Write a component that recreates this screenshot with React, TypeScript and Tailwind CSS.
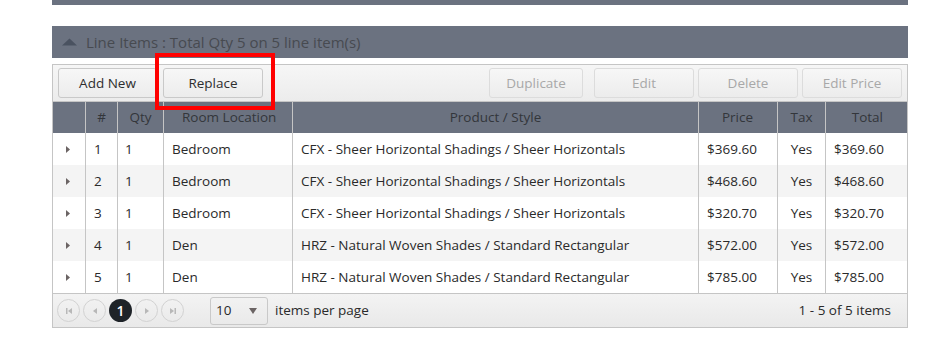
import React from "react";

const rows = [
  { n: 1, qty: 1, room: "Bedroom", product: "CFX - Sheer Horizontal Shadings / Sheer Horizontals", price: "$369.60", tax: "Yes", total: "$369.60" },
  { n: 2, qty: 1, room: "Bedroom", product: "CFX - Sheer Horizontal Shadings / Sheer Horizontals", price: "$468.60", tax: "Yes", total: "$468.60" },
  { n: 3, qty: 1, room: "Bedroom", product: "CFX - Sheer Horizontal Shadings / Sheer Horizontals", price: "$320.70", tax: "Yes", total: "$320.70" },
  { n: 4, qty: 1, room: "Den", product: "HRZ - Natural Woven Shades / Standard Rectangular", price: "$572.00", tax: "Yes", total: "$572.00" },
  { n: 5, qty: 1, room: "Den", product: "HRZ - Natural Woven Shades / Standard Rectangular", price: "$785.00", tax: "Yes", total: "$785.00" },
];

const cols = "grid grid-cols-[33px_32px_46px_129px_406px_79px_48px_81px]";

function Btn({ label, disabled, w }: { label: string; disabled?: boolean; w: string }) {
  return (
    <div
      className={`${w} h-[30px] flex items-center justify-center rounded-[3px] border ${
        disabled ? "border-[#dcdcdc] text-[#a8a8a8]" : "border-[#c9c9c9] text-[#2e2e2e]"
      } bg-gradient-to-b from-[#f7f7f7] to-[#ececec] text-[13.5px]`}
    >
      {label}
    </div>
  );
}

function PagerBtn({ children }: { children: React.ReactNode }) {
  return (
    <div className="w-[23px] h-[23px] rounded-full border border-[#d2d2d2] flex items-center justify-center">
      {children}
    </div>
  );
}

export default function App() {
  return (
    <div className="w-[930px] h-[347px] bg-white relative" style={{ fontFamily: '"Open Sans", "Noto Sans", sans-serif' }}>
      <div className="ml-[52px] w-[856px]">
        <div className="h-[5px] bg-[#6b7280]" />
        <div className="h-[21px]" />
        <div className="h-[32px] bg-[#6b7280] flex items-center pl-[10px] gap-[9px] text-[15px] text-[#474a50]">
          <svg width="15" height="8" viewBox="0 0 15 8"><path d="M0 7.5 L7.5 0.5 L15 7.5 Z" fill="#4a5260" /></svg>
          <span>Line Items : Total Qty 5 on 5 line item(s)</span>
        </div>
        <div className="h-[6px]" />
        <div className="border border-[#c5c5c5]">
          <div className="h-[36px] flex items-center px-[5px] bg-gradient-to-b from-[#f6f6f6] to-[#ececec]">
            <Btn label="Add New" w="w-[99px]" />
            <div className="w-[6px]" />
            <Btn label="Replace" w="w-[100px]" />
            <div className="flex-1" />
            <Btn label="Duplicate" disabled w="w-[94px]" />
            <div className="w-[11px]" />
            <Btn label="Edit" disabled w="w-[100px]" />
            <div className="w-[4px]" />
            <Btn label="Delete" disabled w="w-[100px]" />
            <div className="w-[4px]" />
            <Btn label="Edit Price" disabled w="w-[100px]" />
          </div>
          <div className={`${cols} h-[32px] bg-[#6b7280] text-[13.5px] text-[#33363b] border-t border-[#c5c5c5]`}>
            <div className="border-r border-[#c5c5c5]" />
            <div className="border-r border-[#c5c5c5] flex items-center justify-center">#</div>
            <div className="border-r border-[#c5c5c5] flex items-center justify-center">Qty</div>
            <div className="border-r border-[#c5c5c5] flex items-center pl-[18px]">Room Location</div>
            <div className="border-r border-[#c5c5c5] flex items-center justify-center">Product / Style</div>
            <div className="border-r border-[#c5c5c5] flex items-center justify-end pr-[24px]">Price</div>
            <div className="border-r border-[#c5c5c5] flex items-center justify-center">Tax</div>
            <div className="flex items-center justify-end pr-[24px]">Total</div>
          </div>
          {rows.map((r, i) => (
            <div key={r.n} className={`${cols} h-[32px] text-[13.5px] text-[#2a2a2a] ${i % 2 === 1 ? "bg-[#f4f4f4]" : "bg-white"}`}>
              <div className="border-r border-[#c5c5c5] flex items-center pl-[13px]">
                <svg width="4" height="7" viewBox="0 0 4 7"><path d="M0 0 L4 3.5 L0 7 Z" fill="#6b6464" /></svg>
              </div>
              <div className="border-r border-[#c5c5c5] flex items-center pl-[8px]">{r.n}</div>
              <div className="border-r border-[#c5c5c5] flex items-center pl-[7px]">{r.qty}</div>
              <div className="border-r border-[#c5c5c5] flex items-center pl-[8px]">{r.room}</div>
              <div className="border-r border-[#c5c5c5] flex items-center pl-[8px] whitespace-nowrap">{r.product}</div>
              <div className="border-r border-[#c5c5c5] flex items-center pl-[8px]">{r.price}</div>
              <div className="border-r border-[#c5c5c5] flex items-center justify-center">{r.tax}</div>
              <div className="flex items-center pl-[8px]">{r.total}</div>
            </div>
          ))}
          <div className="h-[34px] border-t border-[#c5c5c5] flex items-center pl-[4px] pr-[16px] bg-gradient-to-b from-[#f3f3f3] to-[#e9e9e9] text-[13.5px] text-[#2a2a2a]">
            <div className="flex items-center gap-[3px]">
              <PagerBtn>
                <svg width="8" height="8" viewBox="0 0 8 8"><rect x="1" y="1" width="1.5" height="6" fill="#b8b8b8" /><path d="M7 1 L3 4 L7 7 Z" fill="#b8b8b8" /></svg>
              </PagerBtn>
              <PagerBtn>
                <svg width="8" height="8" viewBox="0 0 8 8"><path d="M6 1 L2 4 L6 7 Z" fill="#b8b8b8" /></svg>
              </PagerBtn>
              <div className="w-[23px] h-[23px] rounded-full bg-[#1e2328] text-white flex items-center justify-center text-[14px] font-semibold">1</div>
              <PagerBtn>
                <svg width="8" height="8" viewBox="0 0 8 8"><path d="M2 1 L6 4 L2 7 Z" fill="#b8b8b8" /></svg>
              </PagerBtn>
              <PagerBtn>
                <svg width="8" height="8" viewBox="0 0 8 8"><path d="M1 1 L5 4 L1 7 Z" fill="#b8b8b8" /><rect x="5.5" y="1" width="1.5" height="6" fill="#b8b8b8" /></svg>
              </PagerBtn>
            </div>
            <div className="ml-[26px] w-[58px] h-[28px] rounded-[3px] border border-[#c9c9c9] flex items-center justify-between pl-[5px] pr-[10px]">
              <span>10</span>
              <svg width="8" height="6" viewBox="0 0 8 6"><path d="M0 0 L8 0 L4 6 Z" fill="#6b6464" /></svg>
            </div>
            <span className="ml-[7px]">items per page</span>
            <div className="flex-1" />
            <span>1 - 5 of 5 items</span>
          </div>
        </div>
      </div>
      <div className="absolute left-[155px] top-[53px] w-[120px] h-[57px] border-[4px] border-[#ff0000]" />
    </div>
  );
}
